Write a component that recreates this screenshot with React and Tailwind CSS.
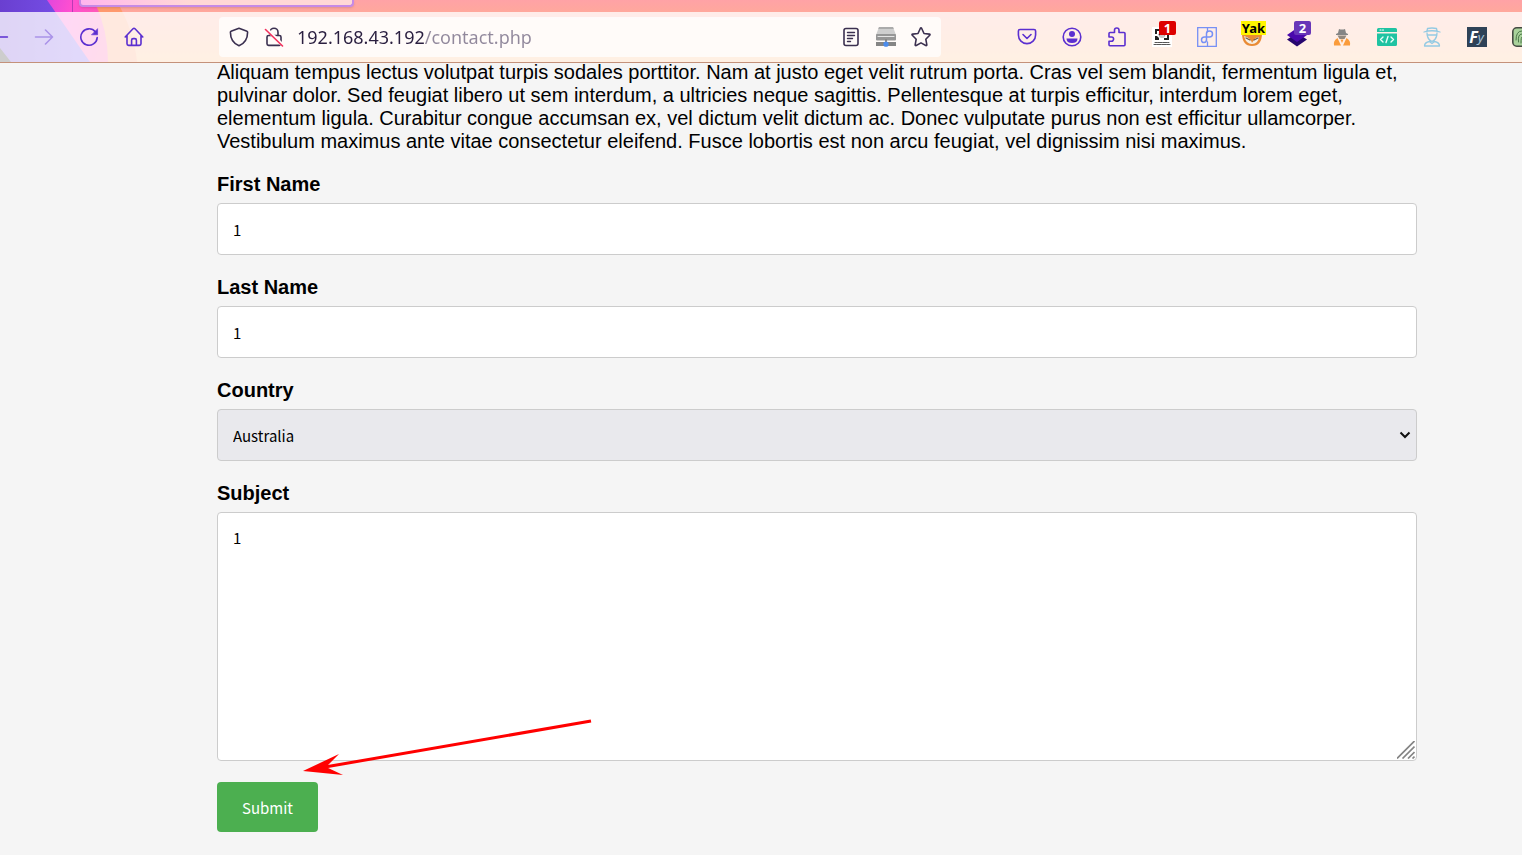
import clsx from "clsx";

const line = {
  fill: "none",
  stroke: "currentColor",
  strokeWidth: 1.6,
  strokeLinecap: "round",
  strokeLinejoin: "round",
};

function Icon({ children, className }) {
  return (
    <svg viewBox="0 0 20 20" aria-hidden="true" className={clsx("h-5 w-5 shrink-0", className)} {...line}>
      {children}
    </svg>
  );
}

function ToolbarButton({ label, children, className }) {
  return (
    <button
      type="button"
      aria-label={label}
      className={clsx("flex h-10 w-[45px] shrink-0 items-center justify-center text-[#5b2fd0]", className)}
    >
      {children}
    </button>
  );
}

function Badge({ children, className }) {
  return (
    <span
      className={clsx(
        "absolute top-1 right-2 h-3.5 text-center font-['Noto_Sans',sans-serif] text-[13px] leading-[14px] font-bold",
        className
      )}
    >
      {children}
    </span>
  );
}

// Coloured shapes of the browser theme, behind the tab strip and the toolbar
function ThemeArt() {
  return (
    <svg className="absolute inset-0 h-full w-full" viewBox="0 0 1522 62" preserveAspectRatio="none" aria-hidden="true">
      <defs>
        <linearGradient id="sky" x1="0" y1="0" x2="0" y2="1">
          <stop offset="0" stopColor="#ffa2a6" />
          <stop offset="0.2" stopColor="#ffa89c" />
          <stop offset="1" stopColor="#ffbc80" />
        </linearGradient>
        <linearGradient id="violet" x1="0" y1="0" x2="1" y2="0">
          <stop offset="0" stopColor="#6a3fd0" />
          <stop offset="1" stopColor="#7a55f0" />
        </linearGradient>
        <linearGradient id="pink" gradientUnits="userSpaceOnUse" x1="40" y1="0" x2="108" y2="20">
          <stop offset="0" stopColor="#d944e0" />
          <stop offset="0.45" stopColor="#ff4fd0" />
          <stop offset="1" stopColor="#ff5fae" />
        </linearGradient>
      </defs>
      <rect width="1522" height="62" fill="url(#sky)" />
      <path d="M0 0H116Q134 30 137 62H0Z" fill="#ff9a6e" />
      <path d="M0 0H94Q108 30 108 62H0Z" fill="url(#pink)" />
      <path d="M0 0H47L90 62H0Z" fill="url(#violet)" />
      <path d="M0 48L11 62H0Z" fill="#1d1b1b" />
    </svg>
  );
}

function BrowserBar() {
  return (
    <header className="relative z-10 h-[63px] overflow-hidden border-b border-[#c4917a]">
      <ThemeArt />
      <div className="relative flex h-3 items-start">
        <div className="h-full w-[73px] border-r border-[#b93bb5]" />
        <div className="ml-1.5 h-[7px] w-[275px] rounded-b-sm border-x-2 border-b-2 border-[#c58ae6] bg-gradient-to-r from-[#ffb5ee] to-[#ffd8d6] to-40% shadow" />
      </div>
      <div className="relative flex h-[50px] items-center bg-white/78">
        <nav className="-ml-6 flex" aria-label="Browser">
          <ToolbarButton label="Back">
            <Icon>
              <path d="M18.4 10H2M9 3L2 10l7 7" />
            </Icon>
          </ToolbarButton>
          <ToolbarButton label="Forward" className="opacity-40">
            <Icon>
              <path d="M1.5 10h17M11.5 3l7 7-7 7" />
            </Icon>
          </ToolbarButton>
          <ToolbarButton label="Reload">
            <Icon>
              <path d="M16.5 5A8.2 8.2 0 1 0 18.2 10.6" />
              <path d="M18.6 2v5.8h-5.8z" fill="currentColor" strokeWidth="0.6" />
            </Icon>
          </ToolbarButton>
          <ToolbarButton label="Home">
            <Icon>
              <path d="M1.2 10L9 1.8q1-1 2 0L18.8 10M3 8.6v8.2q0 1.6 1.6 1.6h10.8q1.6 0 1.6-1.6V8.6" />
              <path d="M7.6 18.2v-5q0-1.6 1.6-1.6h1.6q1.6 0 1.6 1.6v5" />
            </Icon>
          </ToolbarButton>
        </nav>

        <div className="ml-[63px] flex h-10 flex-1 items-center rounded bg-white/75 px-2.5 text-[#3b3050]">
          <Icon>
            <path d="M10 1.2l8 3q.6.2.6 1c0 6.8-2.6 11-8.6 13.6C4 16.2 1.4 12 1.4 5.2q0-.8.6-1z" />
          </Icon>
          <Icon className="ml-[15px]">
            <path d="M6 8.500V5.200a4 4 0 0 1 8 0V8.500M4.600 8.500h10.800q1.600 0 1.600 1.600v6.700q0 1.600-1.600 1.600H4.600Q3 18.400 3 16.800v-6.700q0-1.600 1.600-1.600z" />
            <path d="M2.500 2l16 16" stroke="#fffaf8" strokeWidth="3.500" />
            <path d="M1.500 2.500l17 16.500" stroke="#f2305c" />
          </Icon>
          <input
            aria-label="Address"
            type="text"
            defaultValue="192.168.43.192/contact.php"
            className="ml-[13px] min-w-0 flex-1 bg-linear-[90deg,#2a1f40_127px,#91889c_127px] bg-clip-text font-['Noto_Sans',sans-serif] text-[18px] leading-6 text-transparent outline-none"
          />
          <Icon>
            <rect x="3" y="1.5" width="14" height="17" rx="2" />
            <path d="M6.5 5.5h7M6.500 8.500h7M6.500 11.500h5M6.500 14.500h3" strokeWidth="1.4" />
          </Icon>
          <Icon className="ml-[15px]">
            <g stroke="none">
              <path d="M3 0h14l3 8H0z" fill="#cfcfcf" />
              <path d="M3 0h14l.8 2H2.200z" fill="#ababab" />
              <rect y="7" width="20" height="6.500" rx="1" fill="#979797" />
              <path d="M2 9.500h16" stroke="#e5e5e5" strokeWidth="1.2" />
              <rect y="15" width="20" height="4" fill="#858585" />
              <path d="M10 13v3" stroke="#777" />
              <circle cx="10" cy="17.200" r="2.600" fill="#4c8cec" />
            </g>
          </Icon>
          <Icon className="ml-[15px]">
            <path d="M9.3 1.500q.7-1.200 1.400 0l2.300 5 5.300.6q1.200.3.400 1.200l-3.900 3.900 1 5.500q.1 1.200-1 .8L10 15.900l-4.800 2.600q-1.100.4-1-.8l1-5.500-3.900-3.900q-.8-.9.400-1.200L7 6.500z" />
          </Icon>
        </div>

        <div className="-mr-[22px] ml-[63px] flex shrink-0">
          <ToolbarButton label="Pocket">
            <Icon>
              <path d="M3 2.500h14q1.600 0 1.600 1.600V8a8.600 8.600 0 0 1-17.200 0V4.100Q1.400 2.500 3 2.500z" />
              <path d="M6 7.500l4 4 4-4" />
            </Icon>
          </ToolbarButton>
          <ToolbarButton label="Account">
            <Icon>
              <circle cx="10" cy="10" r="8.800" />
              <circle cx="10" cy="7" r="3" fill="currentColor" stroke="none" />
              <path d="M4.500 11.500h11q0 4.500-5.500 4.500t-5.500-4.500z" fill="currentColor" stroke="none" />
            </Icon>
          </ToolbarButton>
          <ToolbarButton label="Extensions">
            <Icon>
              <path d="M2 6.500q0-1 1-1h4.500V3.300a2 2 0 0 1 4.500 0v2.200h5q1 0 1 1v11.200q0 1-1 1H3q-1 0-1-1v-3.500h2.500a2 2 0 0 0 0-4.200H2z" />
            </Icon>
          </ToolbarButton>
          <ToolbarButton label="Scanner" className="relative">
            <Icon>
              <g stroke="none">
                <rect width="20" height="20" fill="#fff" />
                <path d="M3 2h5v2H5v3H3zM17 13h-5v-2h3V8h2zM3 13V9h2l2 2v2z" fill="#202020" />
                <circle cx="10" cy="7.500" r="3.500" fill="#c8c8c8" />
                <path d="M7.500 7.500q2.500-3 5 0" stroke="#202020" />
                <path d="M3 15.500h14M2 17.500h16" stroke="#555" strokeDasharray="2 .6" strokeWidth="1" />
              </g>
            </Icon>
            <Badge className="w-[17px] rounded-xs bg-[#dd0000] text-white">1</Badge>
          </ToolbarButton>
          <ToolbarButton label="Music notes">
            <Icon className="text-[#7790f5]">
              <path d="M.7.7h18.600v18.600H.7zM10.500.7v4M10.500 15v4" strokeWidth="1.300" strokeLinejoin="miter" />
              <path d="M9.500 14V6.500q0-2.500 3-2.500t3 3-3 3H7.500q-3 0-3 2.800T7 15.500t2.500-3" strokeWidth="1.500" />
            </Icon>
          </ToolbarButton>
          <ToolbarButton label="Yakit" className="relative">
            <Icon>
              <g stroke="none">
                <path d="M0 6h20q0 13-10 13T0 6z" fill="#e98b35" />
                <path d="M2 9q7 2 8 7 3-6 7-6-1 7-7 7T2 9z" fill="#f5efe6" />
                <path d="M4 11l4 2M12 13l4-2" stroke="#6c5949" strokeWidth="1.300" />
              </g>
            </Icon>
            <Badge className="w-[25px] bg-[#fff500] text-black">Yak</Badge>
          </ToolbarButton>
          <ToolbarButton label="Layers" className="relative">
            <Icon>
              <g stroke="none">
                <path d="M10 6l10 6.500L10 19.500 0 12.500z" fill="#26066e" />
                <path d="M10 1l10 7-10 7L0 8z" fill="#4a08ad" />
              </g>
            </Icon>
            <Badge className="w-[17px] rounded-xs bg-[#6836b8] text-white">2</Badge>
          </ToolbarButton>
          <ToolbarButton label="Agent">
            <Icon>
              <g stroke="none">
                <path d="M7 2q3 1 6 0l1 4 2 1v1H4V7l2-1z" fill="#858585" />
                <path d="M5.500 8.500h9L12.500 12h-5z" fill="#92887e" />
                <path d="M5.500 11L9 18.500H2q-1-5 3.500-7.500zM14.500 11L11 18.500h7q1-5-3.500-7.500z" fill="#fa9c3c" />
                <path d="M8.500 12.500h3L10 16z" fill="#fa9c3c" />
              </g>
            </Icon>
          </ToolbarButton>
          <ToolbarButton label="Code window">
            <Icon>
              <g stroke="none">
                <path d="M1.500 1h17Q20 1 20 2.500V5H0V2.500Q0 1 1.500 1zM0 6.500h20v11q0 1.500-1.500 1.500h-17Q0 19 0 17.500z" fill="#1fc3a2" />
                <path d="M3 3h1M5.500 3h1" stroke="#fff" strokeWidth="1.200" />
                <path d="M6 10l-2.500 2.500L6 15M14 10l2.500 2.500L14 15M11 9.500l-2 6" fill="none" stroke="#e9fff8" strokeWidth="1.400" />
              </g>
            </Icon>
          </ToolbarButton>
          <ToolbarButton label="Disguise">
            <Icon className="text-[#94cae3]">
              <path d="M5 4l.5-2.500q4.500-1 9 0L15 4M2 5q8-2.500 16 0M5 6l.5 3.500q1 3.500 4.500 5 3.500-1.500 4.500-5L15 6M5 8h10M2.500 19q0-3.500 5-4.500l2.500 2 2.500-2q5 1 5 4.500z" strokeWidth="1.300" />
            </Icon>
          </ToolbarButton>
          <ToolbarButton label="Fy">
            <span className="flex h-5 w-5 items-center justify-center bg-[#2f4257] font-['Noto_Sans',sans-serif] text-[16px] leading-5 font-bold text-white italic">
              F<span className="text-[13px] font-normal text-[#a9c4d8]">y</span>
            </span>
          </ToolbarButton>
          <ToolbarButton label="Fingerprint">
            <Icon>
              <rect x="0.800" y="0.800" width="18.400" height="18.400" rx="4" fill="#a9d29b" stroke="#454b43" />
              <path d="M4 13q0-9 6-9t6 7M6.500 15q-1-8 3.500-8t3.500 8M9 16q0-6 1-6t1 6" stroke="#4b7648" strokeWidth="1" />
            </Icon>
          </ToolbarButton>
        </div>
      </div>
    </header>
  );
}

const fieldClass =
  "block w-full rounded border border-[#cccccc] px-[15px] font-['Noto_Sans_CJK_SC',sans-serif] text-[15px] text-black";

function Field({ id, label, children }) {
  return (
    <div className="mb-[21px]">
      <label htmlFor={id} className="mb-[7px] block font-bold">
        {label}
      </label>
      {children}
    </div>
  );
}

function ContactForm() {
  return (
    <form className="mt-5" onSubmit={(e) => e.preventDefault()}>
      <Field id="fname" label="First Name">
        <input id="fname" type="text" defaultValue="1" className={clsx(fieldClass, "h-[52px] bg-white")} />
      </Field>
      <Field id="lname" label="Last Name">
        <input id="lname" type="text" defaultValue="1" className={clsx(fieldClass, "h-[52px] bg-white")} />
      </Field>
      <Field id="country" label="Country">
        <div className="relative">
          <select id="country" className={clsx(fieldClass, "h-[52px] appearance-none bg-[#e9e9ed]")}>
            <option>Australia</option>
            <option>Canada</option>
            <option>USA</option>
          </select>
          <svg viewBox="0 0 12 8" aria-hidden="true" className="pointer-events-none absolute top-[22px] right-1.5 h-2 w-3">
            <path d="M1.5 1.5L6 6l4.500-4.500" fill="none" stroke="#111" strokeWidth="2" />
          </svg>
        </div>
      </Field>
      <Field id="subject" label="Subject">
        <div className="relative">
          <textarea
            id="subject"
            defaultValue="1"
            className={clsx(fieldClass, "h-[249px] resize-none bg-white py-[14px] leading-[22px]")}
          />
          <svg viewBox="0 0 18 18" aria-hidden="true" className="pointer-events-none absolute right-0.5 bottom-0.5 h-[18px] w-[18px]">
            <path d="M0 17.500L17.500 0M5.500 17.500l12-12M11 17.500l6.500-6.500M15.500 17.500l2-2" fill="none" stroke="#858585" strokeWidth="1.700" />
          </svg>
          {/* red pointer towards the submit button */}
          <svg
            viewBox="0 0 290 58"
            aria-hidden="true"
            className="pointer-events-none absolute top-[207px] left-[86px] h-[58px] w-[290px]"
          >
            <path d="M288 2L22 48" stroke="#ff0000" strokeWidth="3" />
            <path d="M0 52L36 35 23 48 40 56z" fill="#ff0000" />
          </svg>
        </div>
      </Field>
      <button
        type="submit"
        className="h-[50px] rounded bg-[#4caf50] px-[25px] font-['Noto_Sans_CJK_SC',sans-serif] text-[15px] text-white"
      >
        Submit
      </button>
    </form>
  );
}

export default function App() {
  return (
    <div className="min-h-screen overflow-x-hidden bg-[#f5f5f5] font-['Liberation_Sans',Arial,sans-serif] text-[20px] leading-[23px] text-black">
      <BrowserBar />
      <main className="-mt-0.5 pr-[105px] pb-5 pl-[217px]">
        <p>
          Aliquam tempus lectus volutpat turpis sodales porttitor. Nam at justo eget velit rutrum porta. Cras vel sem
          blandit, fermentum ligula et, pulvinar dolor. Sed feugiat libero ut sem interdum, a ultricies neque sagittis.
          Pellentesque at turpis efficitur, interdum lorem eget, elementum ligula. Curabitur congue accumsan ex, vel
          dictum velit dictum ac. Donec vulputate purus non est efficitur ullamcorper. Vestibulum maximus ante vitae
          consectetur eleifend. Fusce lobortis est non arcu feugiat, vel dignissim nisi maximus.
        </p>
        <ContactForm />
      </main>
    </div>
  );
}
